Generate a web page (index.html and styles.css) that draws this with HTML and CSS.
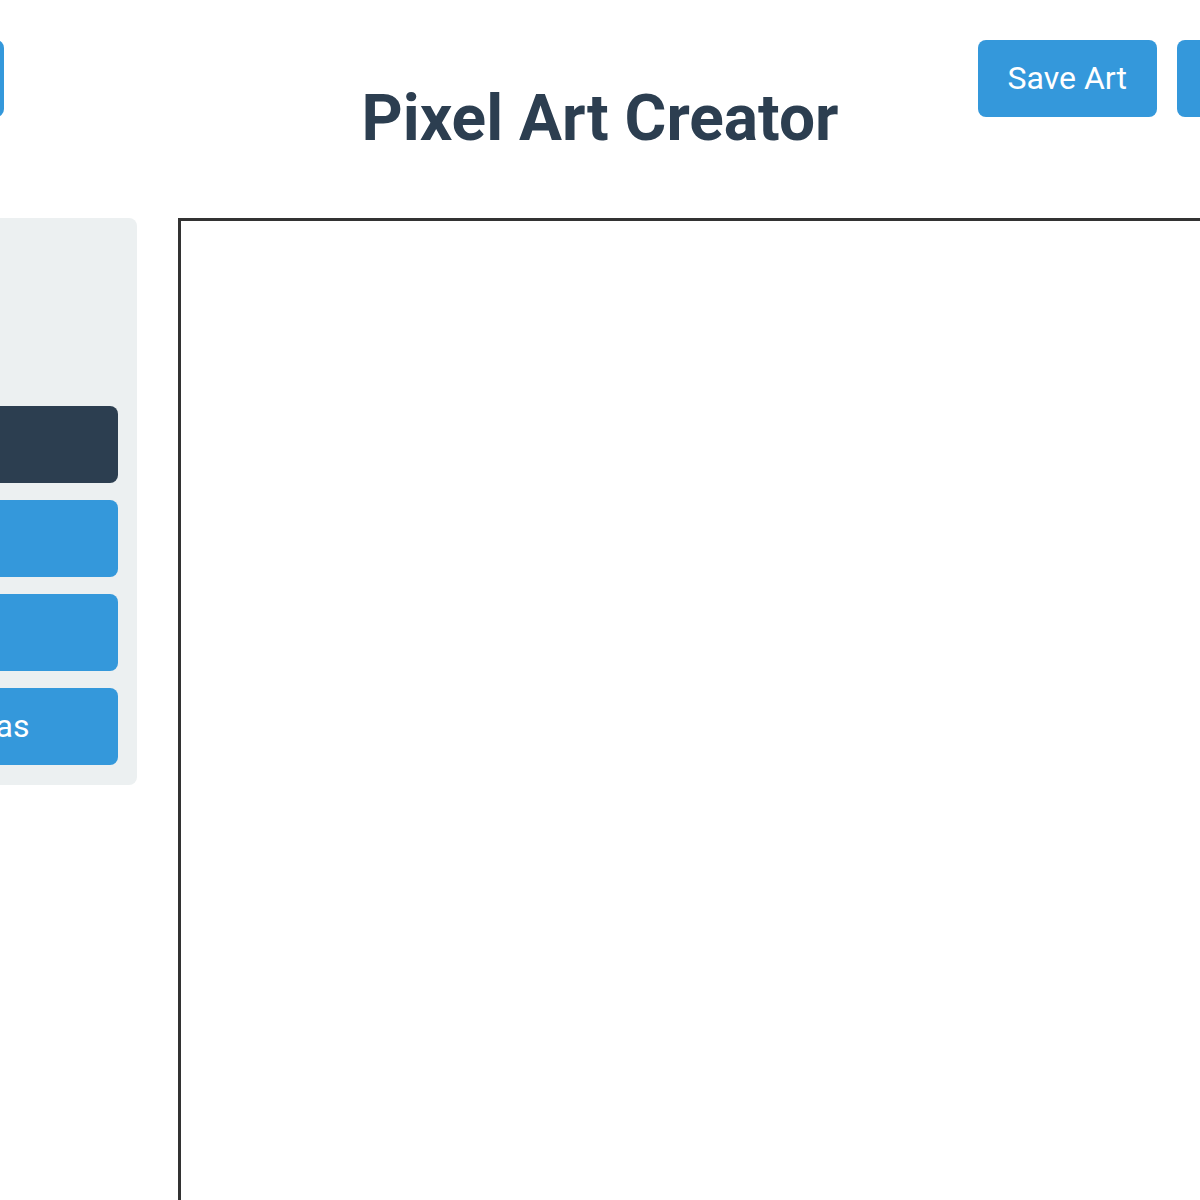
FILE: index.html
```html
<!DOCTYPE html>
<html>
<head>
    <title>Pixel Art Creator</title>
    <meta name="viewport" content="width=device-width, initial-scale=1.0">
    <link rel="stylesheet" href="styles.css">
</head>
<body>
    <div class="page">
        <header class="topbar">
            <div class="tools-left">
                <button class="btn">New Art</button>
            </div>
            <h1 class="title">Pixel Art Creator</h1>
            <div class="tools-right">
                <button class="btn">Save Art</button>
                <button class="btn">Load Art</button>
            </div>
        </header>

        <div class="workspace">
            <div class="sidebar">
                <div class="group">
                    <label class="lbl" for="color">Color</label>
                    <input id="color" class="colorPick" type="color" value="#2c3e50">
                </div>
                <input class="size" type="range" min="1" max="10" value="1">
                <button class="btn toolBtn active">Pencil</button>
                <button class="btn toolBtn">Eraser</button>
                <button class="btn toolBtn">Fill</button>
                <button class="btn toolBtn">Clear Canvas</button>
            </div>
            <canvas id="board" class="board" width="1200" height="1200"></canvas>
        </div>
    </div>
</body>
</html>
```

FILE: styles.css
```css
*{
    margin:0;
    padding:0;
    box-sizing:border-box;
}

body{
    display:flex;
    justify-content:center;
    background-color:white;
    font-family:Roboto, "Liberation Sans", sans-serif;
    overflow:hidden;
}

.page{
    flex-shrink:0;
    width:1800px;
    padding-top:40px;
}

.topbar{
    display:grid;
    grid-template-columns:1fr auto 1fr;
    align-items:start;
}

.tools-left{
    justify-self:end;
    margin-right:357px;
}

.tools-right{
    justify-self:start;
    margin-left:139px;
    display:flex;
    gap:20px;
}

.title{
    margin-top:41px;
    font-size:64px;
    font-weight:bold;
    color:#2c3e50;
    text-align:center;
}

.btn{
    font-family:inherit;
    font-size:32px;
    line-height:37px;
    padding:20px 30px;
    border:none;
    border-radius:8px;
    background-color:#3498db;
    color:white;
    cursor:pointer;
}

.workspace{
    display:flex;
    align-items:flex-start;
    gap:41px;
    margin-top:62px;
    padding-left:34px;
}

.sidebar{
    flex-shrink:0;
    width:403px;
    display:flex;
    flex-direction:column;
    gap:17px;
    padding:20px 19px 20px 20px;
    background-color:#ecf0f1;
    border-radius:8px;
}

.group{
    display:flex;
    flex-direction:column;
    gap:10px;
}

.lbl{
    font-size:32px;
    color:#2c3e50;
}

.colorPick{
    width:100px;
    height:60px;
    border:none;
    background:none;
}

.size{
    width:200px;
    height:26px;
}

.toolBtn{
    width:100%;
}

.active{
    background-color:#2c3e50;
}

.board{
    flex-shrink:0;
    border:3px solid #333;
    background-color:white;
}
```
